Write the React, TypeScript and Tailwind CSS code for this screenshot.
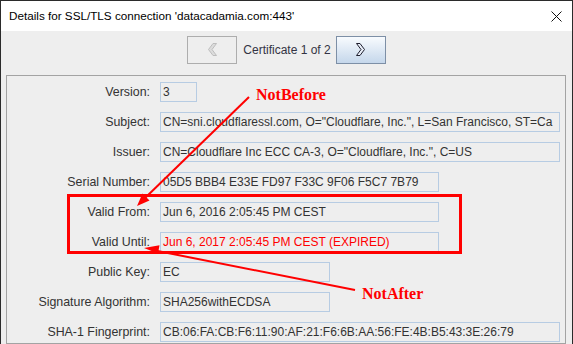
import React from "react";

const rows: { label: string; value: string; w: string; red?: boolean }[] = [
  { label: "Version:", value: "3", w: "w-[37px]" },
  { label: "Subject:", value: 'CN=sni.cloudflaressl.com, O="Cloudflare, Inc.", L=San Francisco, ST=Ca', w: "w-[400px]" },
  { label: "Issuer:", value: 'CN=Cloudflare Inc ECC CA-3, O="Cloudflare, Inc.", C=US', w: "w-[400px]" },
  { label: "Serial Number:", value: "05D5 BBB4 E33E FD97 F33C 9F06 F5C7 7B79", w: "w-[279px]" },
  { label: "Valid From:", value: "Jun 6, 2016 2:05:45 PM CEST", w: "w-[279px]" },
  { label: "Valid Until:", value: "Jun 6, 2017 2:05:45 PM CEST (EXPIRED)", w: "w-[279px]", red: true },
  { label: "Public Key:", value: "EC", w: "w-[170px]" },
  { label: "Signature Algorithm:", value: "SHA256withECDSA", w: "w-[170px]" },
  { label: "SHA-1 Fingerprint:", value: "CB:06:FA:CB:F6:11:90:AF:21:F6:6B:AA:56:FE:4B:B5:43:3E:26:79", w: "w-[400px]" },
];

export default function App() {
  return (
    <div
      className="relative w-[573px] h-[344px] overflow-hidden bg-[#2b2b2b] pt-px pl-px pr-px"
      style={{ fontFamily: '"Liberation Sans", Arial, sans-serif' }}
    >
      <div className="flex flex-col h-full">
        {/* Title bar */}
        <div className="h-[30px] bg-white flex items-center justify-between pl-[8px] pr-[10px] shrink-0">
          <span className="text-[11.7px] text-black leading-none">
            Details for SSL/TLS connection 'datacadamia.com:443'
          </span>
          <svg width="11" height="11" viewBox="0 0 11 11">
            <path d="M0.5 0.5 L10.5 10.5 M10.5 0.5 L0.5 10.5" stroke="#111" strokeWidth="1" />
          </svg>
        </div>
        {/* Content */}
        <div className="flex-1 bg-[#eeeeee] flex flex-col">
          <div className="flex items-center justify-center pt-[3px] h-[31px] box-content">
            <div className="w-[50px] h-[28px] border border-[#adadad] bg-[#eeeeee] flex items-center justify-center">
              <svg width="9" height="13" viewBox="0 0 9 13">
                <polygon points="8.5,0.5 5,0.5 0.5,6.5 5,12.5 8.5,12.5 4,6.5" fill="#dcdcdc" stroke="#bdbdbd" strokeWidth="1" />
              </svg>
            </div>
            <span className="ml-[6px] mr-[5px] text-[12px] text-[#333344] leading-none">Certificate 1 of 2</span>
            <div className="w-[50px] h-[28px] border border-[#7d8fa6] bg-gradient-to-b from-[#f8fbfe] to-[#c5d7eb] flex items-center justify-center">
              <svg width="9" height="13" viewBox="0 0 9 13">
                <polygon points="0.5,0.5 4,0.5 8.5,6.5 4,12.5 0.5,12.5 5,6.5" fill="#e8eef8" stroke="#1e1e2e" strokeWidth="1" />
              </svg>
            </div>
          </div>
          <div className="ml-[5px] mt-[10px] w-[560px] flex-1 border border-[#a3a3a3] pt-[6px] flex flex-col gap-[10px]">
            {rows.map((r) => (
              <div key={r.label} className="flex items-center h-[20px]">
                <div className="w-[143px] text-right text-[12.4px] text-[#333333] leading-none whitespace-nowrap">
                  {r.label}
                </div>
                <div
                  className={`ml-[10px] h-[20px] ${r.w} border border-[#b7cce3] flex items-center pl-[2px] overflow-hidden whitespace-nowrap text-[12px] leading-none ${
                    r.red ? "text-[#ff0000]" : "text-[#333333]"
                  }`}
                >
                  {r.value}
                </div>
              </div>
            ))}
          </div>
        </div>
      </div>

      {/* Annotations overlay */}
      <svg className="absolute left-0 top-0 pointer-events-none" width="573" height="344" viewBox="0 0 573 344">
        <rect x="68.5" y="195.5" width="392" height="57" fill="none" stroke="#ff0000" strokeWidth="3" />
        <line x1="249" y1="97" x2="144" y2="199" stroke="#ff0000" strokeWidth="2" />
        <polygon points="137,206 149.5,200.5 142.5,193.5" fill="#ff0000" />
        <line x1="355" y1="290" x2="155" y2="250.5" stroke="#ff0000" strokeWidth="2" />
        <polygon points="144,248 159.5,245.3 158,253.5" fill="#ff0000" />
      </svg>
      <div
        className="absolute left-[256px] top-[87px] text-[16px] font-bold leading-none text-[#ff0000]"
        style={{ fontFamily: '"Liberation Serif", "Times New Roman", serif' }}
      >
        NotBefore
      </div>
      <div
        className="absolute left-[362px] top-[286px] text-[16px] font-bold leading-none text-[#ff0000]"
        style={{ fontFamily: '"Liberation Serif", "Times New Roman", serif' }}
      >
        NotAfter
      </div>
    </div>
  );
}
